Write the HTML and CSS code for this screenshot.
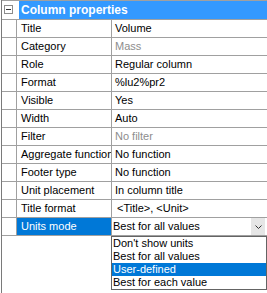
FILE: index.html
```html
<!DOCTYPE html>
<html lang="en">
<head>
    <meta charset="UTF-8">
    <title>Column properties</title>
    <link rel="stylesheet" href="styles.css">
</head>
<body>
    <div class="page">
        <!-- Category header -->
        <div class="head">
            <div class="gutter"><span class="toggle"></span></div>
            <div class="caption">Column properties</div>
        </div>

        <div class="row"><div class="gutter"></div><div class="label">Title</div><div class="value">Volume</div></div>
        <div class="row"><div class="gutter"></div><div class="label">Category</div><div class="value muted">Mass</div></div>
        <div class="row"><div class="gutter"></div><div class="label">Role</div><div class="value">Regular column</div></div>
        <div class="row"><div class="gutter"></div><div class="label">Format</div><div class="value">%lu2%pr2</div></div>
        <div class="row"><div class="gutter"></div><div class="label">Visible</div><div class="value">Yes</div></div>
        <div class="row"><div class="gutter"></div><div class="label">Width</div><div class="value">Auto</div></div>
        <div class="row"><div class="gutter"></div><div class="label">Filter</div><div class="value muted">No filter</div></div>
        <div class="row"><div class="gutter"></div><div class="label">Aggregate function</div><div class="value">No function</div></div>
        <div class="row"><div class="gutter"></div><div class="label">Footer type</div><div class="value">No function</div></div>
        <div class="row"><div class="gutter"></div><div class="label">Unit placement</div><div class="value">In column title</div></div>
        <div class="row"><div class="gutter"></div><div class="label">Title format</div><div class="value indent">&lt;Title&gt;, &lt;Unit&gt;</div></div>
        <div class="row last"><div class="gutter"></div><div class="label selected">Units mode</div>
            <div class="value combo">
                <span class="combo-text">Best for all values</span>
                <span class="combo-btn">
                    <svg width="7" height="4" viewBox="0 0 7 4"><path d="M0.5 0.5 L3.5 3.5 L6.5 0.5" fill="none" stroke="#333" stroke-width="1"/></svg>
                </span>
            </div>
        </div>
    </div>

    <!-- Open dropdown list -->
    <ul class="dropdown">
        <li>Don't show units</li>
        <li>Best for all values</li>
        <li class="active">User-defined</li>
        <li>Best for each value</li>
    </ul>
</body>
</html>
```

FILE: styles.css
```css
body {
    margin: 0;
    width: 267px;
    height: 293px;
    overflow: hidden;
    position: relative;
    background: #fff;
    font-family: "Liberation Sans", Arial, sans-serif;
    font-size: 11px;
    color: #000;
}

.page {
    margin-left: 1px;
    border-left: 1px solid #7a7a7a;
    height: 293px;
}

.gutter {
    width: 14px;
    flex: none;
    position: relative;
}

.head {
    display: flex;
    height: 18px;
    border-top: 1px solid #a0a0a0;
}

.toggle {
    position: absolute;
    left: 2px;
    top: 4px;
    width: 7px;
    height: 7px;
    border: 1px solid #8c8c8c;
    background: #fff;
}

.toggle::after {
    content: "";
    position: absolute;
    left: 1px;
    top: 3px;
    width: 5px;
    height: 1px;
    background: #333;
}

.caption {
    flex: 1;
    margin-left: 3px;
    background: #3399ff;
    color: #fff;
    font-weight: bold;
    font-size: 12px;
    line-height: 18px;
    padding-left: 2px;
}

.row {
    display: flex;
    height: 17px;
    border-top: 1px solid #a0a0a0;
}

.row.last {
    border-bottom: 1px solid #a0a0a0;
}

.label {
    width: 94px;
    flex: none;
    border-left: 1px solid #a0a0a0;
    border-right: 1px solid #a0a0a0;
    padding-left: 4px;
    box-sizing: border-box;
    width: 96px;
    line-height: 17px;
    white-space: nowrap;
    overflow: hidden;
}

.label.selected {
    background: #0078d7;
    color: #fff;
}

.value {
    flex: 1;
    padding-left: 3px;
    line-height: 17px;
    white-space: nowrap;
    overflow: hidden;
}

.value.muted {
    color: #8d8d8d;
}

.value.indent {
    padding-left: 5px;
}

.combo {
    display: flex;
    padding-left: 1px;
}

.combo-text {
    flex: 1;
}

.combo-btn {
    width: 14px;
    height: 17px;
    margin-right: 2px;
    background: #e6e6e6;
    display: flex;
    align-items: center;
    justify-content: center;
}

.dropdown {
    position: absolute;
    left: 111px;
    top: 236px;
    width: 154px;
    margin: 0;
    padding: 0;
    list-style: none;
    border: 1px solid #646464;
    background: #fff;
}

.dropdown li {
    height: 13px;
    line-height: 13px;
    padding-left: 1px;
    white-space: nowrap;
}

.dropdown li.active {
    background: #0078d7;
    color: #fff;
}
```
